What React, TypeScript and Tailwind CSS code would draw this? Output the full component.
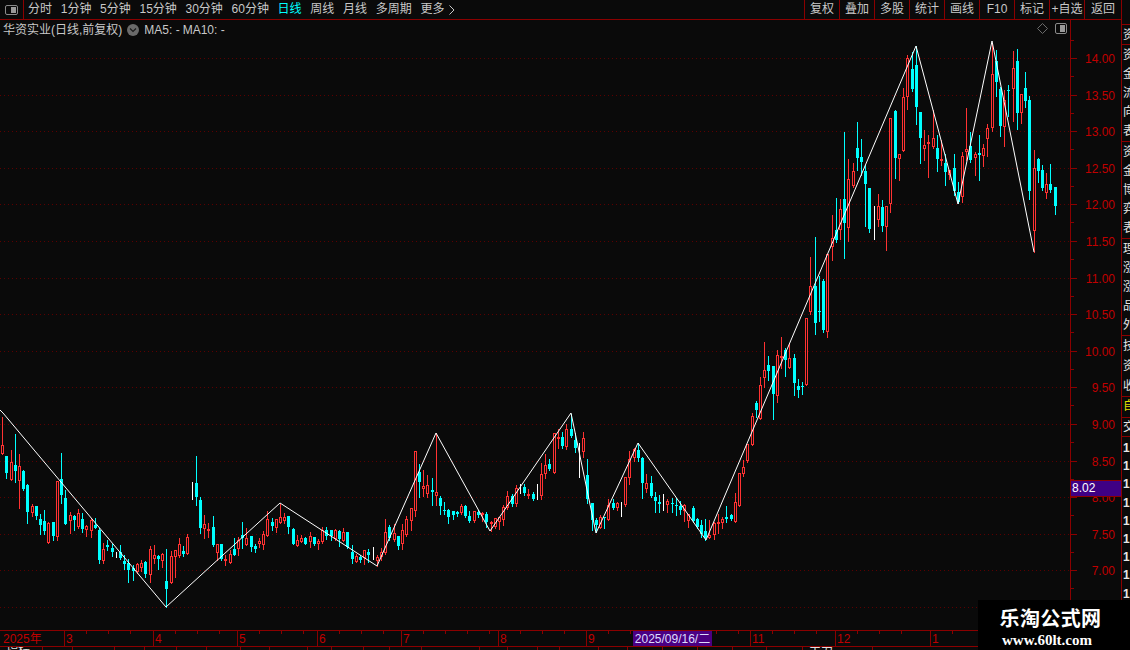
/**
 * K-line chart page
 * Daily candles with zigzag overlay, price axis and date axis
 */

const FONT = 'font-["Liberation_Sans","Noto_Sans_CJK_SC",sans-serif]';

// type, wick top, body top, body bottom, wick bottom (screen y)
const CANDLES = `r417,445,454,454 c456,456,473,478 r450,462,480,480 c434,465,471,482 r454,466,481,508 c470,471,489,490 c484,485,512,523 r504,506,513,516 c506,506,516,519 c514,519,525,534
c510,521,531,534 r522,523,543,543 c522,522,536,540 r481,481,537,540 c453,479,495,503 c490,498,524,524 r512,515,521,533 c515,516,520,530 r509,513,527,528 c513,519,529,532
r525,526,530,536 r518,520,531,537 c518,525,528,528 c528,530,560,563 r543,549,561,563 c540,545,547,550 c544,548,552,556 w552,552,558,558 c545,552,558,559 c555,561,564,569
c559,563,570,582 c565,568,571,580 r563,564,572,573 r560,563,568,571 c561,562,574,577 r546,549,575,582 r545,555,559,563 c555,556,559,569 r553,554,561,567 c549,581,589,607
r551,556,583,583 r550,550,557,577 r538,544,556,557 c546,551,554,556 r534,537,554,554 w482,482,500,500 c456,483,497,505 c497,500,528,533 r515,524,529,538 r523,529,531,537
c516,527,545,546 r544,544,553,560 c544,544,559,560 r555,559,561,565 r550,554,563,563 c538,549,555,555 r537,540,549,555 c522,535,538,548 r528,538,545,545 c536,536,547,551
c544,546,549,552 r538,541,544,547 r531,534,545,549 r511,519,536,536 c518,522,526,530 r519,519,528,532 r504,517,523,523 r513,517,521,523 c516,516,527,533 c528,529,544,544
r535,540,546,546 r535,538,542,542 c537,538,544,544 r532,536,542,547 c537,537,544,545 r539,541,544,549 r527,530,542,543 c527,530,536,539 c530,530,536,540 r529,530,539,540
c530,531,539,546 r528,532,541,541 c532,532,547,548 c545,552,559,563 r554,556,562,562 c555,557,560,562 r550,550,558,564 c549,552,555,562 w547,547,560,560 r555,557,561,566
r548,552,557,560 r519,532,553,554 c525,527,538,540 r524,533,540,541 c536,536,546,549 r524,530,544,549 r516,519,535,536 r508,508,521,530 r451,451,511,516 c464,472,482,497
r470,486,489,496 r475,485,494,497 c478,490,492,505 r433,492,496,505 c496,498,506,514 c502,510,511,514 c509,510,517,523 c511,511,515,519 c511,512,514,516 r504,506,513,514
c505,506,516,517 c511,516,521,522 r511,511,521,522 c510,512,515,517 r512,513,515,521 c512,514,522,527 r521,522,524,531 r518,518,527,528 r517,517,522,529 r505,507,520,525
r491,496,508,509 c494,496,504,506 r485,488,504,506 w484,484,494,494 c484,487,493,495 r489,494,496,498 c492,494,499,500 w484,484,500,500 r463,474,496,499 r454,465,474,478
c459,464,469,470 r433,433,473,473 r429,437,438,448 c432,437,446,448 r424,429,447,449 c414,429,436,437 c433,440,448,452 w443,443,478,478 r432,438,452,457 c459,475,499,503
c503,503,520,530 c518,520,525,532 r515,517,528,528 c517,517,518,528 r499,505,520,520 c499,503,508,509 r502,503,508,510 w502,502,517,517 r477,477,505,506 r451,459,478,484
r448,449,458,461 c443,450,458,461 c457,458,483,498 r474,483,489,492 c476,483,496,497 c492,497,501,512 c495,502,504,512 w494,494,511,511 r499,501,505,512 c498,503,504,512
c498,505,506,515 c501,506,510,514 r504,505,511,521 r514,514,521,527 c506,508,521,522 c518,519,527,528 c520,525,534,537 c519,531,538,540 r520,535,538,538 r522,523,535,539
r514,522,524,533 r517,519,523,528 c506,517,519,522 c514,515,519,520 r493,502,522,522 r473,473,506,506 r460,467,474,476 r444,444,461,462 r413,416,445,445 c401,403,410,417
r377,385,419,419 r342,370,378,387 c356,365,371,380 c366,366,394,419 r350,355,396,402 r337,356,358,368 c348,350,360,376 r344,358,368,368 c354,358,383,395 c379,386,390,397
c382,386,387,394 r318,318,385,385 r257,286,312,314 c237,286,323,334 c276,311,312,321 c279,281,330,332 r254,254,332,337 r215,238,247,260 c198,230,240,242 r199,209,230,239
c132,199,223,258 r159,179,228,241 r163,171,186,187 c122,148,158,170 c139,157,162,175 c165,171,184,226 c188,188,229,232 w206,206,240,240 r194,206,220,226 c200,207,226,231
r206,206,227,250 r118,118,204,212 c110,111,158,178 r154,154,159,180 r88,97,151,151 r55,58,97,109 c52,69,89,91 c46,65,107,124 c112,112,138,163 r130,145,149,160 r135,142,144,177
r110,138,147,148 c135,148,159,171 r140,159,160,165 c154,163,172,185 r170,170,175,179 c154,168,191,195 c182,192,202,203 r152,156,197,202 r108,149,152,160 c132,146,160,162
r152,154,158,175 c135,153,155,180 r144,148,156,166 r124,128,139,156 r43,74,128,131 c50,61,82,96 c87,89,126,136 r90,100,127,146 c85,90,91,116 r51,68,89,121 c49,61,113,129
r94,94,113,123 c72,88,101,107 c96,100,191,199 r150,168,231,252 c158,159,171,182 c165,170,188,190 r173,184,193,198 c164,184,190,192 c187,187,206,214`
  .split(/\s+/)
  .map((s) => ({ t: s[0], y: s.slice(1).split(',').map(Number) }));

const ZIGZAG =
  '0,410 3,413 166,607 280,503 377,566 436,433 490,531 571,413 596,533 638,443 706,540 916,46 958,204 992,41 1034,252';

// last level sits behind the watermark, so it has a grid line but no label
const PRICES = ['14.00', '13.50', '13.00', '12.50', '12.00', '11.50', '11.00', '10.50', '10.00', '9.50', '9.00', '8.50', '8.00', '7.50', '7.00', ''];
const levelY = (k: number) => Math.round(58 + 36.6 * k);

const NAV = ['分时', '1分钟', '5分钟', '15分钟', '30分钟', '60分钟', '日线', '周线', '月线', '多周期'];
const ACTIONS = ['复权', '叠加', '多股', '统计', '画线', 'F10', '标记', '+自选'];
const MONTHS = [
  { label: '2025年', w: 'w-[64px] pl-[3px]' },
  { label: '3', w: 'w-[89px] pl-[1px]' },
  { label: '4', w: 'w-[84px] pl-[1px]' },
  { label: '5', w: 'w-[80px] pl-[1px]' },
  { label: '6', w: 'w-[84px] pl-[1px]' },
  { label: '7', w: 'w-[97px] pl-[1px]' },
  { label: '8', w: 'w-[88px] pl-[1px]' },
  { label: '9', w: 'w-[86px] pl-[1px]' },
  { label: '', w: 'w-[78px] pl-[1px]' },
  { label: '11', w: 'w-[85px] pl-[1px]' },
  { label: '12', w: 'w-[95px] pl-[1px]' },
  { label: '1', w: 'w-[100px] pl-[1px]' },
];
const MONTH_X = [64, 153, 237, 317, 401, 498, 586, 672, 750, 835, 930];
const TABS = [
  { label: '指标', w: 'w-[43px]' },
  { label: '', w: 'w-[30px]' },
  { label: '', w: 'w-[42px]' },
  { label: '', w: 'w-[30px]' },
  { label: '', w: 'w-[32px]' },
  { label: '', w: 'w-[30px]' },
  { label: '', w: 'w-[34px]' },
  { label: '', w: 'w-[29px]' },
  { label: '', w: 'w-[38px]' },
  { label: '', w: 'w-[24px]' },
  { label: '', w: 'w-[32px]' },
  { label: '', w: 'w-[26px]' },
  { label: '', w: 'w-[32px]' },
  { label: '', w: 'w-[58px]' },
  { label: '', w: 'w-[28px]' },
  { label: '', w: 'w-[30px]' },
  { label: '', w: 'w-[22px]' },
  { label: '', w: 'w-[39px]' },
  { label: '', w: 'w-[29px]' },
  { label: '', w: 'w-[35px]' },
  { label: '', w: 'w-[35px]' },
  { label: '', w: 'w-[35px]' },
  { label: '', w: 'w-[34px]' },
  { label: '', w: 'w-[36px]' },
  { label: '主力', w: 'w-[70px]' },
];
const STRIP = [
  { text: '资', h: 'h-[20px]' },
  { text: '资金流向表', h: 'h-[97px]' },
  { text: '资金博弈表', h: 'h-[97px]' },
  { text: '理涨涨品外', h: 'h-[97px]' },
  { text: '技资收', h: 'h-[61px]' },
];
const ROWS = Array.from({ length: 9 }, (_, i) => i);

function Candle({ i, t, y }: { i: number; t: string; y: number[] }) {
  const x = Math.floor(2.67 + 4.21 * i);
  const [top, bodyTop, bodyBot, bottom] = y;
  if (t === 'w') return <rect x={x} y={top} width={1} height={bottom - top} fill="#ffffff" />;
  if (t === 'c') {
    return (
      <g fill="#00ffff">
        <rect x={x} y={top} width={1} height={bottom - top + 1} />
        <rect x={x - 1} y={bodyTop} width={3} height={Math.max(bodyBot - bodyTop, 1)} />
      </g>
    );
  }
  return (
    <g fill="#ff3232">
      <rect x={x} y={top} width={1} height={bodyTop - top} />
      <rect x={x} y={bodyBot} width={1} height={bottom - bodyBot + 1} />
      <rect x={x - 0.5} y={bodyTop + 0.5} width={2} height={Math.max(bodyBot - bodyTop - 1, 1)} fill="#0a0a0a" stroke="#ff3232" />
    </g>
  );
}

function ChartCanvas() {
  return (
    <svg className="absolute left-0 top-0" width={1070} height={610} viewBox="0 20 1070 610" shapeRendering="crispEdges">
      {PRICES.map((_, k) => (
        <line key={k} x1={0} x2={1070} y1={levelY(k) + 0.5} y2={levelY(k) + 0.5} stroke="#5c0000" strokeDasharray="1 3" shapeRendering="auto" />
      ))}
      {CANDLES.map((c, i) => (
        <Candle key={i} i={i} t={c.t} y={c.y} />
      ))}
      <polyline points={ZIGZAG} fill="none" stroke="#ffffff" strokeWidth={1} shapeRendering="auto" />
    </svg>
  );
}

function PriceAxis() {
  return (
    <div className="relative w-[51px] h-full border-l border-[#8b0000]">
      <svg className="absolute left-0 top-0" width={12} height={610} viewBox="0 20 12 610" shapeRendering="crispEdges">
        {PRICES.map((_, k) => (
          <g key={k} fill="#8b0000">
            <rect x={0} y={levelY(k)} width={6} height={1} />
            <rect x={0} y={levelY(k) + 18} width={3} height={1} />
            {k === 0 && <rect x={0} y={levelY(0) - 18} width={3} height={1} />}
          </g>
        ))}
      </svg>
      <div className="flex flex-col pt-[21px] pr-[6px] text-[#c00000] text-[12px] text-right">
        {PRICES.map((p, k) => (
          <div key={k} className="h-[36.6px] leading-[36.6px]">
            {p}
          </div>
        ))}
      </div>
      {/* current price marker */}
      <div className="absolute left-0 right-0 top-[460px] h-[17px] bg-[#3f0084] border-y border-[#8b0000] text-white text-[12px] leading-[15px] pl-[1px]">
        8.02
      </div>
    </div>
  );
}

function TimeAxis() {
  const ticks: number[] = [];
  MONTH_X.forEach((m, i) => {
    const end = MONTH_X[i + 1] ?? 978;
    for (let x = m + 22; x < end - 8; x += 22) ticks.push(x);
  });
  return (
    <div className="relative flex h-[17px] border-y border-[#8b0000] text-[#c00000] text-[12px] leading-[16px]">
      {MONTHS.map((m, i) => (
        <div key={i} className={`${m.w} shrink-0 ${i > 0 ? 'border-l border-[#8b0000]' : ''}`}>
          {m.label}
        </div>
      ))}
      <svg className="absolute left-0 top-0" width={1000} height={4} shapeRendering="crispEdges">
        {ticks.map((x) => (
          <rect key={x} x={x} y={0} width={1} height={3} fill="#8b0000" />
        ))}
      </svg>
      <div className="absolute left-[633px] top-0 w-[79px] h-[15px] bg-[#4b0082] text-[#dcdcff] leading-[16px] text-center whitespace-nowrap">
        2025/09/16/二
      </div>
    </div>
  );
}

export default function App() {
  return (
    <div className={`flex w-[1130px] h-[650px] overflow-hidden bg-[#0a0a0a] ${FONT}`}>
      <div className="flex flex-col w-[1122px] h-full border-r border-[#8b0000]">
        {/* top toolbar */}
        <div className="flex h-[20px] shrink-0 border-b border-[#8b0000] text-[#c8c8c8] text-[12px] leading-[19px]">
          <div className="flex items-center justify-center w-[24px] h-full border-r border-[#8b0000]">
            <div className="flex justify-end w-[13px] h-[10px] border border-[#8a8a8a] rounded-[2px] p-[1px]">
              <div className="w-[5px] h-full bg-[#9a9a9a]" />
            </div>
          </div>
          <div className="flex flex-1 gap-[8.7px] pl-[4px] whitespace-nowrap">
            {NAV.map((n) => (
              <span key={n} className={n === '日线' ? 'text-[#00ffff]' : ''}>
                {n}
              </span>
            ))}
            <span className="flex items-center gap-[5px]">
              更多
              <svg width={6} height={10} viewBox="0 0 6 10" fill="none" stroke="#c8c8c8">
                <path d="M0.5 0.5 L5 5 L0.5 9.5" />
              </svg>
            </span>
          </div>
          {ACTIONS.map((a) => (
            <div key={a} className="w-[35px] text-center border-l border-[#8b0000] whitespace-nowrap">
              {a}
            </div>
          ))}
          <div className="w-[37px] text-center border-l border-[#8b0000]">返回</div>
        </div>

        {/* chart + price axis */}
        <div className="flex h-[610px] shrink-0">
          <div className="relative w-[1070px] h-full">
            <ChartCanvas />
            <div className="absolute left-[3px] top-[1px] flex items-center h-[18px] text-[#c8c8c8] text-[12px] whitespace-nowrap">
              <span>华资实业(日线,前复权)</span>
              <svg className="ml-[5px] mr-[5px]" width={12} height={12} viewBox="0 0 12 12">
                <circle cx={6} cy={6} r={6} fill="#6a6a6a" />
                <path d="M3 4.5 L6 7.5 L9 4.5" fill="none" stroke="#1a1a1a" strokeWidth={1.2} />
              </svg>
              <span>MA5: -</span>
              <span className="ml-[3px]">MA10: -</span>
            </div>
            <div className="absolute right-[3px] top-[3px] flex items-center gap-[7px]">
              <svg width={11} height={11} viewBox="0 0 11 11" fill="none" stroke="#6a6a6a">
                <path d="M5.5 0.5 L10.5 5.5 L5.5 10.5 L0.5 5.5 Z" />
              </svg>
              <div className="flex justify-end w-[12px] h-[11px] border border-[#8a8a8a] rounded-[2px] p-[1px]">
                <div className="w-[5px] h-full bg-[#9a9a9a]" />
              </div>
            </div>
          </div>
          <PriceAxis />
        </div>

        <TimeAxis />

        {/* bottom tabs, only their top edge fits in the window */}
        <div className="flex h-[3px] overflow-hidden text-[#e0e0e0] text-[12px] leading-[9px]">
          {TABS.map((t, i) => (
            <div key={i} className={`${t.w} shrink-0 pl-[6px] border-r border-[#8b0000] whitespace-nowrap`}>
              {t.label}
            </div>
          ))}
        </div>
      </div>

      {/* right vertical tabs, clipped by the window */}
      <div className="flex flex-col w-[8px] h-full overflow-hidden text-[#e6e6e6] text-[12px]">
        <div className="h-[25px] shrink-0 border-b border-[#8b0000]" />
        {STRIP.map((s) => (
          <div key={s.text} className={`${s.h} shrink-0 border-b border-[#8b0000] flex flex-col justify-around pl-[1px] w-[24px]`}>
            {s.text.split('').map((ch, i) => (
              <span key={i} className="block leading-[14px]">
                {ch}
              </span>
            ))}
          </div>
        ))}
        <div className="h-[21px] shrink-0 border-b border-[#8b0000] text-[#e0e000] pl-[1px] leading-[18px] w-[24px]">自</div>
        <div className="h-[19px] shrink-0 border-b border-[#8b0000] pl-[1px] leading-[18px] w-[24px]">交</div>
        <div className="flex flex-col pt-[2px] pl-[1px] font-bold">
          {ROWS.map((r) => (
            <div key={r} className="h-[18.2px] leading-[18px]">
              1
            </div>
          ))}
        </div>
      </div>

      {/* site watermark */}
      <div className="absolute left-[978px] top-[600px] flex flex-col items-center w-[152px] h-[50px] bg-black text-white font-bold">
        <div className='mt-[5px] mr-[7px] h-[26px] text-[20px] leading-[26px] tracking-[0.4px] font-["Noto_Sans_CJK_SC",sans-serif]'>乐淘公式网</div>
        <div className='mt-[1px] pr-[14px] text-[15px] leading-[16px] font-["Liberation_Serif",serif]'>www.60lt.com</div>
      </div>
    </div>
  );
}
